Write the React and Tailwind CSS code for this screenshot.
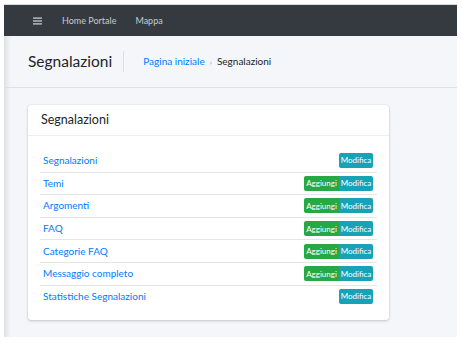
import React from 'react';

const voci = [
    { nome: 'Segnalazioni', aggiungi: false },
    { nome: 'Temi', aggiungi: true },
    { nome: 'Argomenti', aggiungi: true },
    { nome: 'FAQ', aggiungi: true },
    { nome: 'Categorie FAQ', aggiungi: true },
    { nome: 'Messaggio completo', aggiungi: true },
    { nome: 'Statistiche Segnalazioni', aggiungi: false },
];

const font = { fontFamily: 'Lato, "Noto Sans", sans-serif' };

const App = () => {
    return (
        <div className="w-[462px] h-[347px] bg-white overflow-hidden" style={font}>
            <div className="ml-[4px] mt-[4px] w-[453px] h-[333px] flex flex-col bg-[#f4f6f9] border-t border-[#d8dce0]">
                {/* Navbar */}
                <nav className="h-[31px] shrink-0 bg-[#343a40] flex items-center pl-[29px] text-[9px] text-[#c8cbcf]">
                    <svg width="9" height="8" viewBox="0 0 9 8" className="mr-[20px]">
                        <rect x="0" y="0.5" width="9" height="1.2" fill="#d6d8da" />
                        <rect x="0" y="3.4" width="9" height="1.2" fill="#d6d8da" />
                        <rect x="0" y="6.3" width="9" height="1.2" fill="#d6d8da" />
                    </svg>
                    <span className="mr-[19px]">Home Portale</span>
                    <span>Mappa</span>
                </nav>

                <div className="flex-1 shadow-[inset_7px_0_6px_-5px_rgba(0,0,0,0.12)]">
                    {/* Intestazione */}
                    <div className="h-[52px] flex items-center pl-[24px] border-b border-[#dee2e6]">
                        <h1 className="text-[15.5px] text-[#212529] leading-none pr-[11px] border-r border-[#dcdfe3] py-[3px]">
                            Segnalazioni
                        </h1>
                        <div className="flex items-center text-[10px] pl-[19px]">
                            <span className="text-[#007bff]">Pagina iniziale</span>
                            <span className="text-[#9aa0a6] px-[5px] text-[8px]">›</span>
                            <span className="text-[#212529]">Segnalazioni</span>
                        </div>
                    </div>

                    {/* Card */}
                    <div className="pt-[17px] pl-[24px]">
                        <div className="w-[361px] bg-white rounded-[3px] shadow-[0_0_1px_rgba(0,0,0,0.15),0_1px_3px_rgba(0,0,0,0.2)]">
                            <div className="h-[31px] flex items-center px-[13px] border-b border-[#eceef0]">
                                <h3 className="text-[12.5px] text-[#212529]">Segnalazioni</h3>
                            </div>
                            <div className="px-[12px] pt-[13px] pb-[13px]">
                                {voci.map((v, i) => (
                                    <div
                                        key={v.nome}
                                        className={`h-[22.6px] flex items-center justify-between pl-[3px] pr-[4px] ${i > 0 ? 'border-t border-[#e3e6e9]' : ''}`}
                                    >
                                        <span className="text-[10px] text-[#007bff]">{v.nome}</span>
                                        <div className="flex text-[8px] text-white leading-none">
                                            {v.aggiungi && (
                                                <span className="w-[35px] h-[15px] flex items-center justify-center bg-[#28a745] rounded-l-[2px]">
                                                    Aggiungi
                                                </span>
                                            )}
                                            <span
                                                className={`w-[34px] h-[15px] flex items-center justify-center bg-[#17a2b8] ${v.aggiungi ? 'rounded-r-[2px]' : 'rounded-[2px]'}`}
                                            >
                                                Modifica
                                            </span>
                                        </div>
                                    </div>
                                ))}
                            </div>
                        </div>
                    </div>
                </div>
            </div>
        </div>
    );
};

export default App;
